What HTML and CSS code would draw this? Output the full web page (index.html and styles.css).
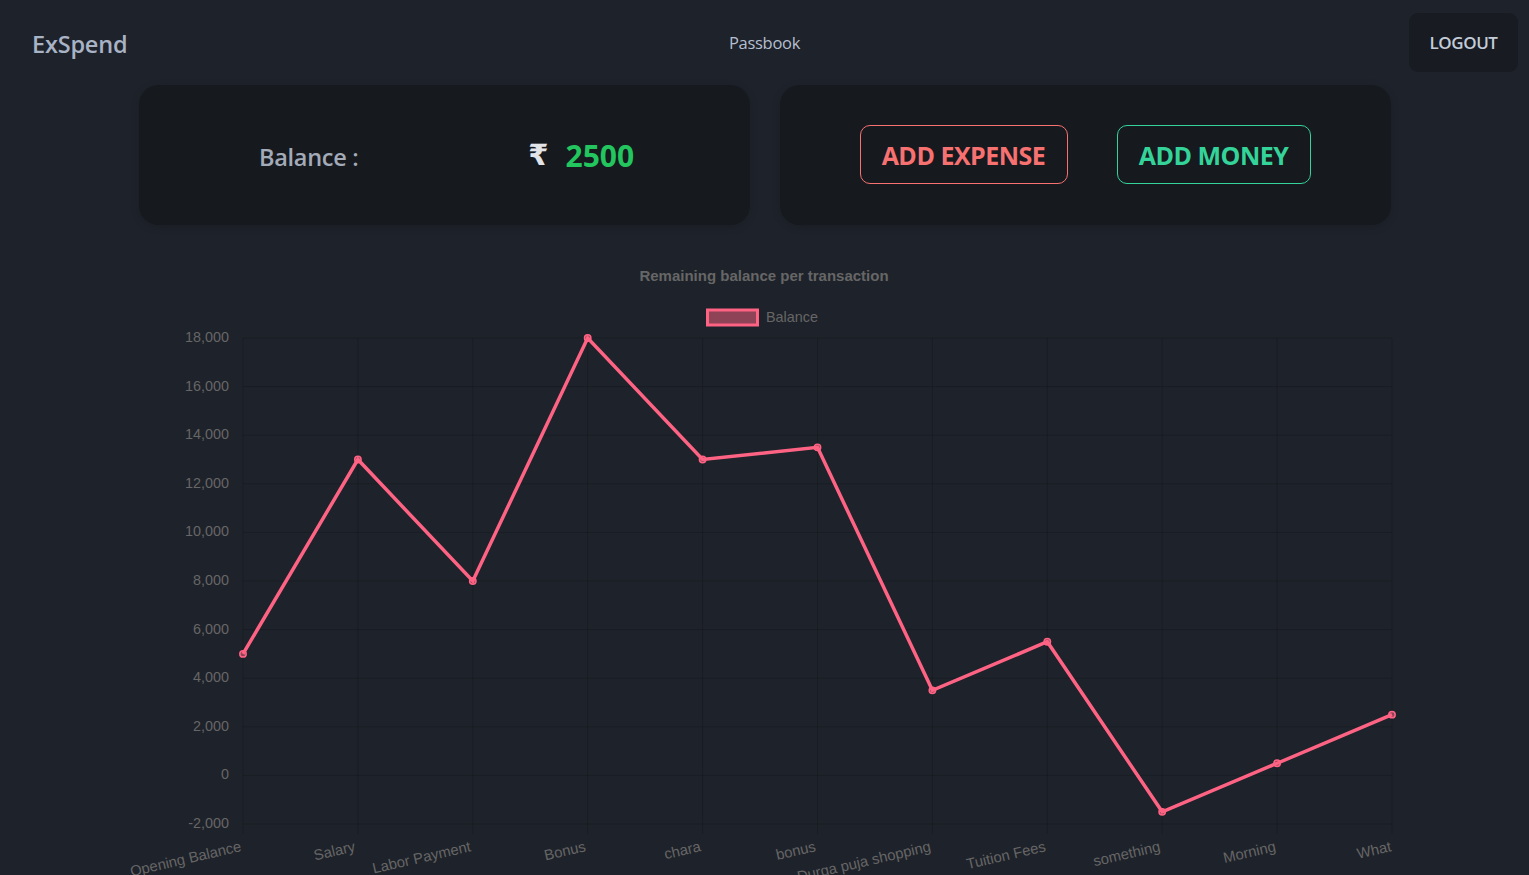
FILE: index.html
```html
<!DOCTYPE html>
<html lang="en">
<head>
<meta charset="utf-8">
<title>ExSpend - Passbook</title>
<link rel="stylesheet" href="styles.css">
</head>
<body>
<header class="topbar">
  <div class="brand">ExSpend</div>
  <nav class="nav"><a class="nav-link" href="#">Passbook</a></nav>
  <div class="actions"><button class="logout">LOGOUT</button></div>
</header>
<main class="main">
  <section class="cards">
    <div class="card balance-card">
      <div class="balance-label">Balance :</div>
      <div class="balance-value"><span class="rupee">₹</span><span class="amount">2500</span></div>
    </div>
    <div class="card action-card">
      <button class="btn btn-expense">ADD EXPENSE</button>
      <button class="btn btn-money">ADD MONEY</button>
    </div>
  </section>
</main>
<section class="chart">
  <svg class="chart-svg" width="1529" height="635" viewBox="0 240 1529 635" xmlns="http://www.w3.org/2000/svg">
    <text class="c-title" x="764" y="281" text-anchor="middle">Remaining balance per transaction</text>
    <rect x="707.5" y="310" width="50" height="15" fill="rgba(255,99,132,0.5)" stroke="#ff6384" stroke-width="3"/>
    <text class="c-text" x="766" y="322">Balance</text>
    <g class="grid" stroke="rgba(0,0,0,0.16)" stroke-width="1">
      <line x1="243" y1="338" x2="1392" y2="338"/>
      <line x1="243" y1="386.6" x2="1392" y2="386.6"/>
      <line x1="243" y1="435.2" x2="1392" y2="435.2"/>
      <line x1="243" y1="483.8" x2="1392" y2="483.8"/>
      <line x1="243" y1="532.4" x2="1392" y2="532.4"/>
      <line x1="243" y1="581" x2="1392" y2="581"/>
      <line x1="243" y1="629.6" x2="1392" y2="629.6"/>
      <line x1="243" y1="678.2" x2="1392" y2="678.2"/>
      <line x1="243" y1="726.8" x2="1392" y2="726.8"/>
      <line x1="243" y1="775.4" x2="1392" y2="775.4"/>
      <line x1="243" y1="824" x2="1392" y2="824"/>
      <line x1="243" y1="338" x2="243" y2="834"/>
      <line x1="357.9" y1="338" x2="357.9" y2="834"/>
      <line x1="472.8" y1="338" x2="472.8" y2="834"/>
      <line x1="587.7" y1="338" x2="587.7" y2="834"/>
      <line x1="702.6" y1="338" x2="702.6" y2="834"/>
      <line x1="817.5" y1="338" x2="817.5" y2="834"/>
      <line x1="932.4" y1="338" x2="932.4" y2="834"/>
      <line x1="1047.3" y1="338" x2="1047.3" y2="834"/>
      <line x1="1162.2" y1="338" x2="1162.2" y2="834"/>
      <line x1="1277.1" y1="338" x2="1277.1" y2="834"/>
      <line x1="1392" y1="338" x2="1392" y2="834"/>
    </g>
    <g class="c-text" text-anchor="end">
      <text x="229" y="342">18,000</text>
      <text x="229" y="390.6">16,000</text>
      <text x="229" y="439.2">14,000</text>
      <text x="229" y="487.8">12,000</text>
      <text x="229" y="536.4">10,000</text>
      <text x="229" y="585">8,000</text>
      <text x="229" y="633.6">6,000</text>
      <text x="229" y="682.2">4,000</text>
      <text x="229" y="730.8">2,000</text>
      <text x="229" y="779.4">0</text>
      <text x="229" y="828">-2,000</text>
    </g>
    <g class="c-text x-labels" text-anchor="end">
      <text x="242" y="851" transform="rotate(-13 242 851)">Opening Balance</text>
      <text x="356" y="851" transform="rotate(-13 356 851)">Salary</text>
      <text x="471.5" y="851" transform="rotate(-13 471.5 851)">Labor Payment</text>
      <text x="586.5" y="851" transform="rotate(-13 586.5 851)">Bonus</text>
      <text x="701.5" y="851" transform="rotate(-13 701.5 851)">chara</text>
      <text x="816.5" y="851" transform="rotate(-13 816.5 851)">bonus</text>
      <text x="931.5" y="851" transform="rotate(-13 931.5 851)">Durga puja shopping</text>
      <text x="1046.5" y="851" transform="rotate(-13 1046.5 851)">Tuition Fees</text>
      <text x="1161" y="851" transform="rotate(-13 1161 851)">something</text>
      <text x="1276.5" y="851" transform="rotate(-13 1276.5 851)">Morning</text>
      <text x="1392" y="851" transform="rotate(-13 1392 851)">What</text>
    </g>
    <polyline fill="none" stroke="#ff6384" stroke-width="3.5" stroke-linejoin="miter" points="243,653.9 357.9,459.5 472.8,581 587.7,338 702.6,459.5 817.5,447.35 932.4,690.35 1047.3,641.75 1162.2,811.85 1277.1,763.25 1392,714.65"/>
    <g fill="rgba(255,99,132,0.5)" stroke="#ff6384" stroke-width="1.5">
      <circle cx="243" cy="653.9" r="3.2"/>
      <circle cx="357.9" cy="459.5" r="3.2"/>
      <circle cx="472.8" cy="581" r="3.2"/>
      <circle cx="587.7" cy="338" r="3.2"/>
      <circle cx="702.6" cy="459.5" r="3.2"/>
      <circle cx="817.5" cy="447.35" r="3.2"/>
      <circle cx="932.4" cy="690.35" r="3.2"/>
      <circle cx="1047.3" cy="641.75" r="3.2"/>
      <circle cx="1162.2" cy="811.85" r="3.2"/>
      <circle cx="1277.1" cy="763.25" r="3.2"/>
      <circle cx="1392" cy="714.65" r="3.2"/>
    </g>
  </svg>
</section>
</body>
</html>
```

FILE: styles.css
```css
html, body {
  margin: 0;
  padding: 0;
  background: #1e222a;
  height: 875px;
  overflow: hidden;
}

body {
  font-family: "Open Sans", "Noto Sans", sans-serif;
  color: #a6b0c0;
}

.topbar {
  height: 85px;
  display: grid;
  grid-template-columns: 1fr auto 1fr;
  align-items: center;
  padding: 0 11px;
  box-sizing: border-box;
}

.brand {
  font-size: 23.5px;
  font-weight: 600;
  color: #a8b3c5;
  letter-spacing: -0.2px;
  padding-top: 2px;
  padding-left: 21px;
}

.nav {
  text-align: center;
}

.nav-link {
  font-size: 16.5px;
  color: #b4bfcf;
  text-decoration: none;
  letter-spacing: -0.3px;
}

.actions {
  display: flex;
  justify-content: flex-end;
}

.logout {
  width: 109px;
  height: 59px;
  background: #181b21;
  border: none;
  border-radius: 9px;
  color: #c3ccd9;
  font-family: "Open Sans", "Noto Sans", sans-serif;
  font-size: 17px;
  font-weight: 600;
  letter-spacing: -0.4px;
  padding: 0;
}

.main {
  display: flex;
  justify-content: center;
}

.cards {
  width: 1252px;
  display: grid;
  grid-template-columns: 1fr 1fr;
  gap: 30px;
}

.card {
  height: 140px;
  background: #16191e;
  border-radius: 20px;
  box-sizing: border-box;
  box-shadow: 0 2px 8px rgba(0, 0, 0, 0.15);
}

.balance-card {
  display: grid;
  grid-template-columns: 1fr 1fr;
  align-items: center;
  padding: 0 35px;
}

.balance-label {
  text-align: center;
  font-size: 23.5px;
  font-weight: 600;
  color: #a3aab8;
  letter-spacing: -0.3px;
  padding-top: 3px;
}

.balance-value {
  display: flex;
  justify-content: center;
  align-items: center;
  gap: 17px;
  padding-left: 4px;
}

.rupee {
  font-family: "DejaVu Sans", "Noto Sans", sans-serif;
  font-size: 29px;
  font-weight: 700;
  color: #e2e4e8;
}

.amount {
  font-size: 30px;
  font-weight: 700;
  color: #22c55e;
}

.action-card {
  display: flex;
  justify-content: center;
  align-items: center;
  gap: 49px;
  padding-top: 1px;
}

.btn {
  height: 59px;
  background: transparent;
  border: 1px solid;
  border-radius: 10px;
  font-family: "Open Sans", "Noto Sans", sans-serif;
  font-size: 25px;
  font-weight: 700;
  letter-spacing: -0.5px;
  padding: 0 10px;
  margin-top: -2px;
}

.btn-expense {
  width: 208px;
  color: #f87171;
  border-color: #f87171;
}

.btn-money {
  width: 194px;
  color: #34d399;
  border-color: #34d399;
}

.chart {
  margin-top: 15px;
  height: 635px;
}

.chart-svg {
  display: block;
}

.c-title {
  font-family: "Liberation Sans", Arial, sans-serif;
  font-size: 15px;
  font-weight: 700;
  fill: #666666;
}

.c-text {
  font-family: "Liberation Sans", Arial, sans-serif;
  font-size: 14.4px;
  fill: #666666;
}

.x-labels {
  font-size: 14.8px;
}
```
